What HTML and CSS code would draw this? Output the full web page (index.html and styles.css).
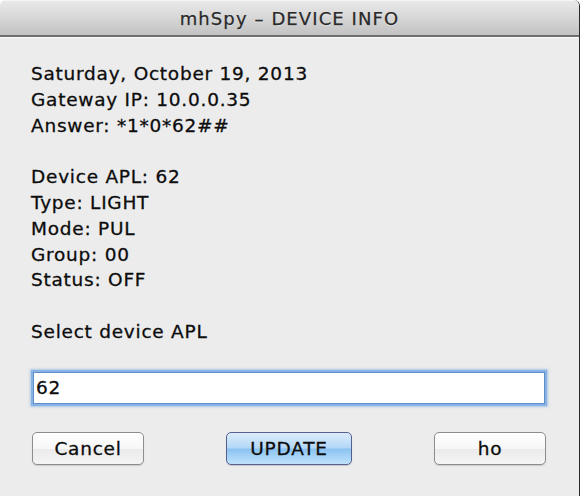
FILE: index.html
```html
<!DOCTYPE html>
<html>
<head>
<meta charset="utf-8">
<link rel="stylesheet" href="styles.css">
</head>
<body>
<div class="window">
  <div class="titlebar">mhSpy – DEVICE INFO</div>
  <div class="content">
    <div class="info">
      <div class="line">Saturday, October 19, 2013</div>
      <div class="line">Gateway IP: 10.0.0.35</div>
      <div class="line">Answer: *1*0*62##</div>
      <div class="line blank"></div>
      <div class="line">Device APL: 62</div>
      <div class="line">Type: LIGHT</div>
      <div class="line">Mode: PUL</div>
      <div class="line">Group: 00</div>
      <div class="line">Status: OFF</div>
      <div class="line blank"></div>
      <div class="line">Select device APL</div>
    </div>
    <input class="field" type="text" value="62">
    <div class="buttons">
      <button class="btn">Cancel</button>
      <button class="btn btn-default">UPDATE</button>
      <button class="btn">ho</button>
    </div>
  </div>
</div>
</body>
</html>
```
FILE: styles.css
```css
html, body {
  margin: 0;
  padding: 0;
  background: #ffffff;
}
body {
  width: 580px;
  height: 496px;
  overflow: hidden;
  font-family: "DejaVu Sans", "Liberation Sans", sans-serif;
  color: #111;
}
.window {
  width: 580px;
  height: 496px;
  background: #ececec;
  border-right: 1px solid #2a2a2a;
  box-sizing: border-box;
  border-radius: 6px 6px 0 0;
  overflow: hidden;
  display: flex;
  flex-direction: column;
}
.titlebar {
  height: 37px;
  box-sizing: border-box;
  border-top: 1px solid #f6f6f6;
  border-bottom: 2px solid #6e6e6e;
  background: linear-gradient(#e9e9e9, #d6d6d6 50%, #c2c2c2);
  text-align: center;
  font-size: 18px;
  letter-spacing: 1.1px;
  line-height: 36px;
  color: #2a2a2a;
  -webkit-text-stroke: 0.25px #2a2a2a;
  text-shadow: 0 1px 0 rgba(255,255,255,0.5);
}
.content {
  border-top: 1px solid #fafafa;
  padding: 23px 33px 0 31px;
  display: flex;
  flex-direction: column;
}
.info {
  font-size: 18.5px;
  line-height: 25.8px;
  letter-spacing: 0.75px;
  color: #0c0c0c;
  -webkit-text-stroke: 0.3px #0c0c0c;
}
.line.blank {
  height: 25.8px;
}
.field {
  margin-top: 27px;
  margin-left: 2px;
  margin-right: 1px;
  height: 32px;
  box-sizing: border-box;
  border: 1px solid #5d8fc9;
  box-shadow: 0 0 0 2px #86b3e3, 0 0 2px 3px rgba(120,170,225,0.55);
  background: #fff;
  font-family: "DejaVu Sans", "Liberation Sans", sans-serif;
  font-size: 18.5px;
  letter-spacing: 0.75px;
  padding: 0 2px;
  color: #0c0c0c;
  -webkit-text-stroke: 0.3px #0c0c0c;
  outline: none;
}
.buttons {
  margin-top: 28px;
  padding-left: 1px;
  display: flex;
  justify-content: space-between;
}
.btn {
  width: 112px;
  height: 33px;
  box-sizing: border-box;
  border: 1px solid #8d8d8d;
  border-radius: 5px;
  background: linear-gradient(#ffffff, #f7f7f7 50%, #ebebeb 52%, #f4f4f4);
  box-shadow: 0 1px 1px rgba(0,0,0,0.15);
  font-family: "DejaVu Sans", "Liberation Sans", sans-serif;
  font-size: 18.5px;
  letter-spacing: 0.75px;
  color: #0c0c0c;
  -webkit-text-stroke: 0.3px #0c0c0c;
  padding: 0;
}
.btn-default {
  width: 126px;
  border-color: #55608f;
  background: linear-gradient(#dcecfb, #b3d7f7 48%, #8cc3f1 52%, #bfe2fd);
}
```
